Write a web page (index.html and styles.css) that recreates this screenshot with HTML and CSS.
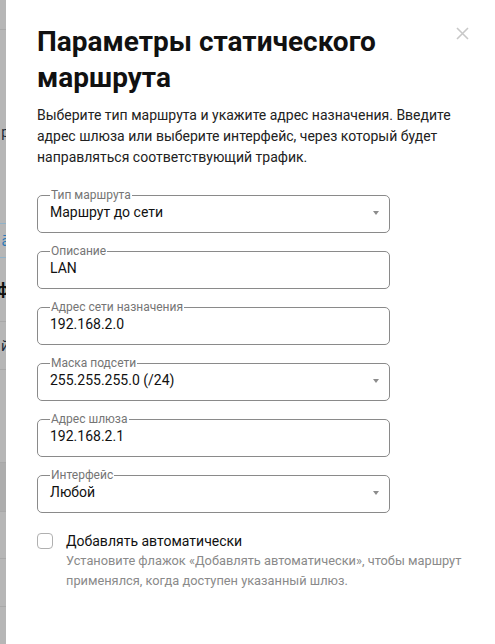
FILE: index.html
```html
<!DOCTYPE html>
<html lang="ru">
<head>
<meta charset="utf-8">
<link rel="stylesheet" href="styles.css">
</head>
<body>
<div class="backdrop">
  <div class="bg-row r0"></div>
  <div class="bg-row r1"><span class="g">р</span></div>
  <div class="bg-row r2"><span class="g blue">ā</span></div>
  <div class="bg-row r3"><span class="g bold">ф</span></div>
  <div class="bg-row r4"><span class="g">й</span></div>
  <div class="bg-row r5"></div>
  <div class="bg-row r6"></div>
  <div class="bg-row r7 dark"></div>
  <div class="bg-row r8"></div>
  <div class="bg-row r9"></div>
</div>
<div class="modal">
  <button class="close" aria-label="Закрыть">
    <svg width="13" height="13" viewBox="0 0 13 13"><path d="M1 1L12 12M12 1L1 12" stroke="#c8c8c8" stroke-width="1.6" fill="none"/></svg>
  </button>
  <h1 class="title">Параметры статического маршрута</h1>
  <p class="desc">Выберите тип маршрута и укажите адрес назначения. Введите адрес шлюза или выберите интерфейс, через который будет направляться соответствующий трафик.</p>
  <form class="form">
    <fieldset class="field">
      <legend>Тип маршрута</legend>
      <div class="row"><span class="value">Маршрут до сети</span><span class="arrow"></span></div>
    </fieldset>
    <fieldset class="field">
      <legend>Описание</legend>
      <div class="row"><span class="value">LAN</span></div>
    </fieldset>
    <fieldset class="field">
      <legend>Адрес сети назначения</legend>
      <div class="row"><span class="value">192.168.2.0</span></div>
    </fieldset>
    <fieldset class="field">
      <legend>Маска подсети</legend>
      <div class="row"><span class="value">255.255.255.0 (/24)</span><span class="arrow"></span></div>
    </fieldset>
    <fieldset class="field">
      <legend>Адрес шлюза</legend>
      <div class="row"><span class="value">192.168.2.1</span></div>
    </fieldset>
    <fieldset class="field">
      <legend>Интерфейс</legend>
      <div class="row"><span class="value">Любой</span><span class="arrow"></span></div>
    </fieldset>
    <div class="check">
      <span class="box"></span>
      <div class="check-text">
        <div class="check-label">Добавлять автоматически</div>
        <div class="check-help">Установите флажок «Добавлять автоматически», чтобы маршрут применялся, когда доступен указанный шлюз.</div>
      </div>
    </div>
  </form>
</div>
</body>
</html>
```

FILE: styles.css
```css
* { box-sizing: border-box; }
html, body { margin: 0; padding: 0; }
body {
  width: 495px;
  height: 644px;
  overflow: hidden;
  display: flex;
  font-family: Roboto, "Noto Sans", Arial, sans-serif;
  background: #b4b4b4;
}
.backdrop {
  width: 6px;
  flex: none;
  background: #b6b6b6;
  overflow: hidden;
  display: flex;
  flex-direction: column;
}
.bg-row {
  flex: none;
  display: flex;
  justify-content: flex-end;
  align-items: center;
  border-bottom: 1px solid #a8a8a8;
  font-size: 14px;
  color: #1a2a3a;
  white-space: nowrap;
}
.bg-row .g { margin-right: -3px; }
.bg-row .blue { color: #2a7ab8; }
.bg-row .bold { font-weight: 700; color: #111; font-size: 16px; }
.r0 { height: 30px; }
.r1 { height: 194px; align-items: flex-start; padding-top: 94px; border-bottom-color: #90b2c8; }
.r2 { height: 34px; border-bottom-color: #90b2c8; }
.r3 { height: 64px; }
.r4 { height: 48px; }
.r5 { height: 93px; }
.r6 { height: 0; border: 0; }
.r7 { height: 49px; }
.dark { background: #adadad; }
.r8 { height: 47px; }
.r9 { height: 48px; }

.modal {
  position: relative;
  flex: 1;
  background: #fff;
  padding: 24px 0 0 31px;
}
.close {
  position: absolute;
  top: 27px;
  right: 26px;
  width: 13px;
  height: 13px;
  padding: 0;
  border: 0;
  background: none;
  display: block;
}
.close svg { display: block; }
.title {
  margin: 0;
  font-size: 28px;
  line-height: 36px;
  font-weight: 700;
  color: #111;
  width: 400px;
}
.desc {
  margin: 9px 0 0;
  width: 430px;
  font-size: 14px;
  line-height: 21px;
  color: #222;
}
.form {
  margin-top: 21px;
  width: 353px;
  display: flex;
  flex-direction: column;
  gap: 12px;
}
.field {
  margin: 0;
  padding: 0 10px 0 12px;
  border: 1px solid #8a8a8a;
  border-radius: 5px;
  height: 44px;
  min-width: 0;
}
.field legend {
  padding: 0 1px;
  font-size: 12px;
  line-height: 12px;
  color: #757575;
}
.row {
  display: flex;
  align-items: center;
  justify-content: space-between;
  height: 20px;
  margin-top: 1px;
}
.value {
  font-size: 14px;
  line-height: 20px;
  color: #111;
}
.arrow {
  flex: none;
  width: 0;
  height: 0;
  margin-top: 1px;
  border-left: 3px solid transparent;
  border-right: 3px solid transparent;
  border-top: 4px solid #8c8c8c;
}
.check {
  display: flex;
  align-items: flex-start;
  gap: 13px;
  margin-top: 7px;
}
.box {
  flex: none;
  width: 16px;
  height: 16px;
  border: 1px solid #b0b0b0;
  border-radius: 4px;
  margin-top: 1px;
}
.check-text { width: 410px; flex: none; }
.check-label {
  font-size: 14px;
  line-height: 18px;
  color: #111;
}
.check-help {
  margin-top: 1px;
  font-size: 12.8px;
  line-height: 20px;
  color: #8a8a8a;
}
```
